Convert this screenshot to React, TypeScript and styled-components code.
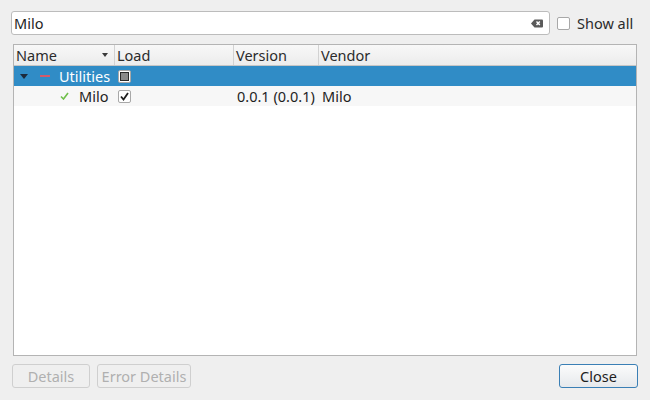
import React from "react";
import styled, { createGlobalStyle } from "styled-components";

const Global = createGlobalStyle`
  html, body { margin: 0; padding: 0; background: #efefef; }
  body { font-family: "Noto Sans", "DejaVu Sans", sans-serif; font-size: 14.5px; color: #2b2b2b; }
`;

const Win = styled.div`
  width: 650px;
  height: 400px;
  box-sizing: border-box;
  padding: 11px 12px 12px 11px;
  display: flex;
  flex-direction: column;
`;

const TopRow = styled.div`
  display: flex;
  align-items: center;
  height: 24px;
  gap: 7px;
`;

const Search = styled.div`
  width: 539px;
  height: 24px;
  box-sizing: border-box;
  border: 1px solid #bcbcbc;
  border-radius: 3px;
  background: #fff;
  display: flex;
  align-items: center;
  padding: 0 6px 0 2px;
`;

const SearchText = styled.span`
  flex: 1;
  color: #1e1e1e;
`;

const Check = styled.span<{ $size?: number }>`
  display: inline-flex;
  align-items: center;
  justify-content: center;
  width: ${(p) => p.$size ?? 13}px;
  height: ${(p) => p.$size ?? 13}px;
  box-sizing: border-box;
  border: 1px solid #a8a8a8;
  border-radius: 2px;
  background: #fff;
`;

const ShowAll = styled.label`
  display: flex;
  align-items: center;
  gap: 7px;
`;

const Panel = styled.div`
  margin: 9px 0 0 2px;
  width: 624px;
  height: 312px;
  box-sizing: border-box;
  border: 1px solid #b4b4b4;
  background: #fff;
  display: flex;
  flex-direction: column;
`;

const cols = "101px 119px 85px 1fr";

const Header = styled.div`
  display: grid;
  grid-template-columns: ${cols};
  height: 20px;
  background: linear-gradient(#f8f8f8, #ececec);
  border-bottom: 1px solid #c6c6c6;
`;

const HeadCell = styled.div<{ $last?: boolean }>`
  display: flex;
  align-items: center;
  padding-left: 2px;
  border-right: ${(p) => (p.$last ? "none" : "1px solid #d2d2d2")};
  position: relative;
`;

const SortArrow = styled.span`
  position: absolute;
  right: 6px;
  top: 8px;
  width: 0;
  height: 0;
  border-left: 3.5px solid transparent;
  border-right: 3.5px solid transparent;
  border-top: 4px solid #3a3a3a;
`;

const Row = styled.div<{ $sel?: boolean; $alt?: boolean }>`
  display: grid;
  grid-template-columns: ${cols};
  height: 20px;
  background: ${(p) => (p.$sel ? "#308cc6" : p.$alt ? "#f7f7f7" : "#fff")};
  color: ${(p) => (p.$sel ? "#fff" : "#1e1e1e")};
`;

const Cell = styled.div<{ $pad?: number }>`
  display: flex;
  align-items: center;
  padding-left: ${(p) => p.$pad ?? 3}px;
  padding-bottom: 1px;
  white-space: nowrap;
  overflow: visible;
`;

const Footer = styled.div`
  display: flex;
  align-items: center;
  margin-top: 8px;
  gap: 7px;
  padding-left: 1px;
`;

const Btn = styled.button<{ $w: number; $primary?: boolean }>`
  width: ${(p) => p.$w}px;
  height: 24px;
  box-sizing: border-box;
  font-family: inherit;
  font-size: 14.5px;
  padding: 0;
  border-radius: 3px;
  border: 1px solid ${(p) => (p.$primary ? "#3a7fb5" : "#cfcfcf")};
  background: ${(p) => (p.$primary ? "linear-gradient(#fbfbfb, #e6e9ec)" : "#efefef")};
  color: ${(p) => (p.$primary ? "#1e1e1e" : "#b0b0b0")};
`;

const Spacer = styled.div`
  flex: 1;
`;

export default function App() {
  return (
    <>
      <Global />
      <Win>
        <TopRow>
          <Search>
            <SearchText>Milo</SearchText>
            <svg width="12" height="9" viewBox="0 0 12 9">
              <path d="M3.5 0.5 H11 a1 1 0 0 1 1 1 V7.5 a1 1 0 0 1 -1 1 H3.5 L0 4.5 Z" fill="#5a5a5a" />
              <path d="M5.5 2.5 L8.8 6 M8.8 2.5 L5.5 6" stroke="#fff" strokeWidth="1.4" />
            </svg>
          </Search>
          <ShowAll>
            <Check />
            Show all
          </ShowAll>
        </TopRow>
        <Panel>
          <Header>
            <HeadCell>
              Name
              <SortArrow />
            </HeadCell>
            <HeadCell>Load</HeadCell>
            <HeadCell>Version</HeadCell>
            <HeadCell $last>Vendor</HeadCell>
          </Header>
          <Row $sel>
            <Cell $pad={6}>
              <svg width="8" height="5" viewBox="0 0 8 5" style={{ marginRight: 12 }}>
                <path d="M0 0 H8 L4 5 Z" fill="#1c2a3c" />
              </svg>
              <svg width="10" height="2" viewBox="0 0 10 2" style={{ marginRight: 9 }}>
                <rect width="10" height="2" fill="#d45a6a" />
              </svg>
              Utilities
            </Cell>
            <Cell $pad={3}>
              <Check>
                <svg width="9" height="9" viewBox="0 0 9 9">
                  <rect x="0.5" y="0.5" width="8" height="8" fill="#8a8a8a" stroke="#2a2a2a" />
                </svg>
              </Check>
            </Cell>
            <Cell />
            <Cell />
          </Row>
          <Row $alt>
            <Cell $pad={46}>
              <svg width="9" height="8" viewBox="0 0 9 8" style={{ marginRight: 10 }}>
                <path d="M1 4.5 L3.5 7 L8 1" stroke="#6fbf4a" strokeWidth="1.6" fill="none" />
              </svg>
              Milo
            </Cell>
            <Cell $pad={3}>
              <Check>
                <svg width="9" height="9" viewBox="0 0 9 9">
                  <path d="M1 4.5 L3.5 7.5 L8 1" stroke="#1e1e1e" strokeWidth="1.8" fill="none" />
                </svg>
              </Check>
            </Cell>
            <Cell>0.0.1 (0.0.1)</Cell>
            <Cell>Milo</Cell>
          </Row>
        </Panel>
        <Footer>
          <Btn $w={78}>Details</Btn>
          <Btn $w={94}>Error Details</Btn>
          <Spacer />
          <Btn $w={79} $primary>Close</Btn>
        </Footer>
      </Win>
    </>
  );
}
